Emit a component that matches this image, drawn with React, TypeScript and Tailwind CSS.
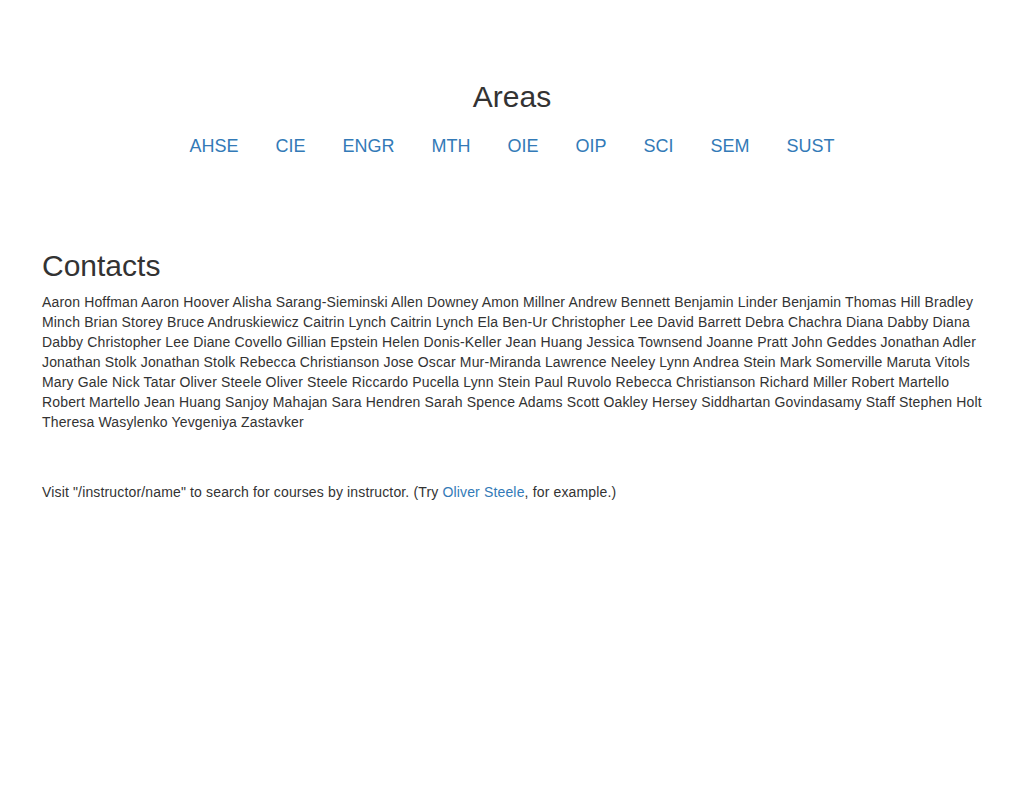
import React from "react";

const areas = ["AHSE", "CIE", "ENGR", "MTH", "OIE", "OIP", "SCI", "SEM", "SUST"];

const contacts =
  "Aaron Hoffman Aaron Hoover Alisha Sarang-Sieminski Allen Downey Amon Millner Andrew Bennett Benjamin Linder Benjamin Thomas Hill Bradley Minch Brian Storey Bruce Andruskiewicz Caitrin Lynch Caitrin Lynch Ela Ben-Ur Christopher Lee David Barrett Debra Chachra Diana Dabby Diana Dabby Christopher Lee Diane Covello Gillian Epstein Helen Donis-Keller Jean Huang Jessica Townsend Joanne Pratt John Geddes Jonathan Adler Jonathan Stolk Jonathan Stolk Rebecca Christianson Jose Oscar Mur-Miranda Lawrence Neeley Lynn Andrea Stein Mark Somerville Maruta Vitols Mary Gale Nick Tatar Oliver Steele Oliver Steele Riccardo Pucella Lynn Stein Paul Ruvolo Rebecca Christianson Richard Miller Robert Martello Robert Martello Jean Huang Sanjoy Mahajan Sara Hendren Sarah Spence Adams Scott Oakley Hersey Siddhartan Govindasamy Staff Stephen Holt Theresa Wasylenko Yevgeniya Zastavker";

export default function App() {
  return (
    <div className="min-h-[798px] w-full bg-white font-['Liberation_Sans',Helvetica,Arial,sans-serif] text-[14px] leading-[20px] text-[#333]">
      <div className="mx-auto w-[970px] px-[15px]">
        <div className="pt-[80px]">
          <h2 className="text-center text-[30px] font-normal leading-[33px]">Areas</h2>
          <ul className="mt-[20px] flex justify-center text-[18px] leading-[26px]">
            {areas.map((a) => (
              <li key={a} className="px-[18.5px]">
                <a href="#" className="text-[#337ab7]">
                  {a}
                </a>
              </li>
            ))}
          </ul>
        </div>
        <h2 className="mb-[10px] mt-[90px] text-[30px] font-normal leading-[33px]">Contacts</h2>
        <p className="tracking-[0.15px]">{contacts}</p>
        <p className="mt-[50px] tracking-[0.15px]">
          Visit "/instructor/name" to search for courses by instructor. (Try{" "}
          <a href="#" className="text-[#337ab7]">
            Oliver Steele
          </a>
          , for example.)
        </p>
      </div>
    </div>
  );
}
